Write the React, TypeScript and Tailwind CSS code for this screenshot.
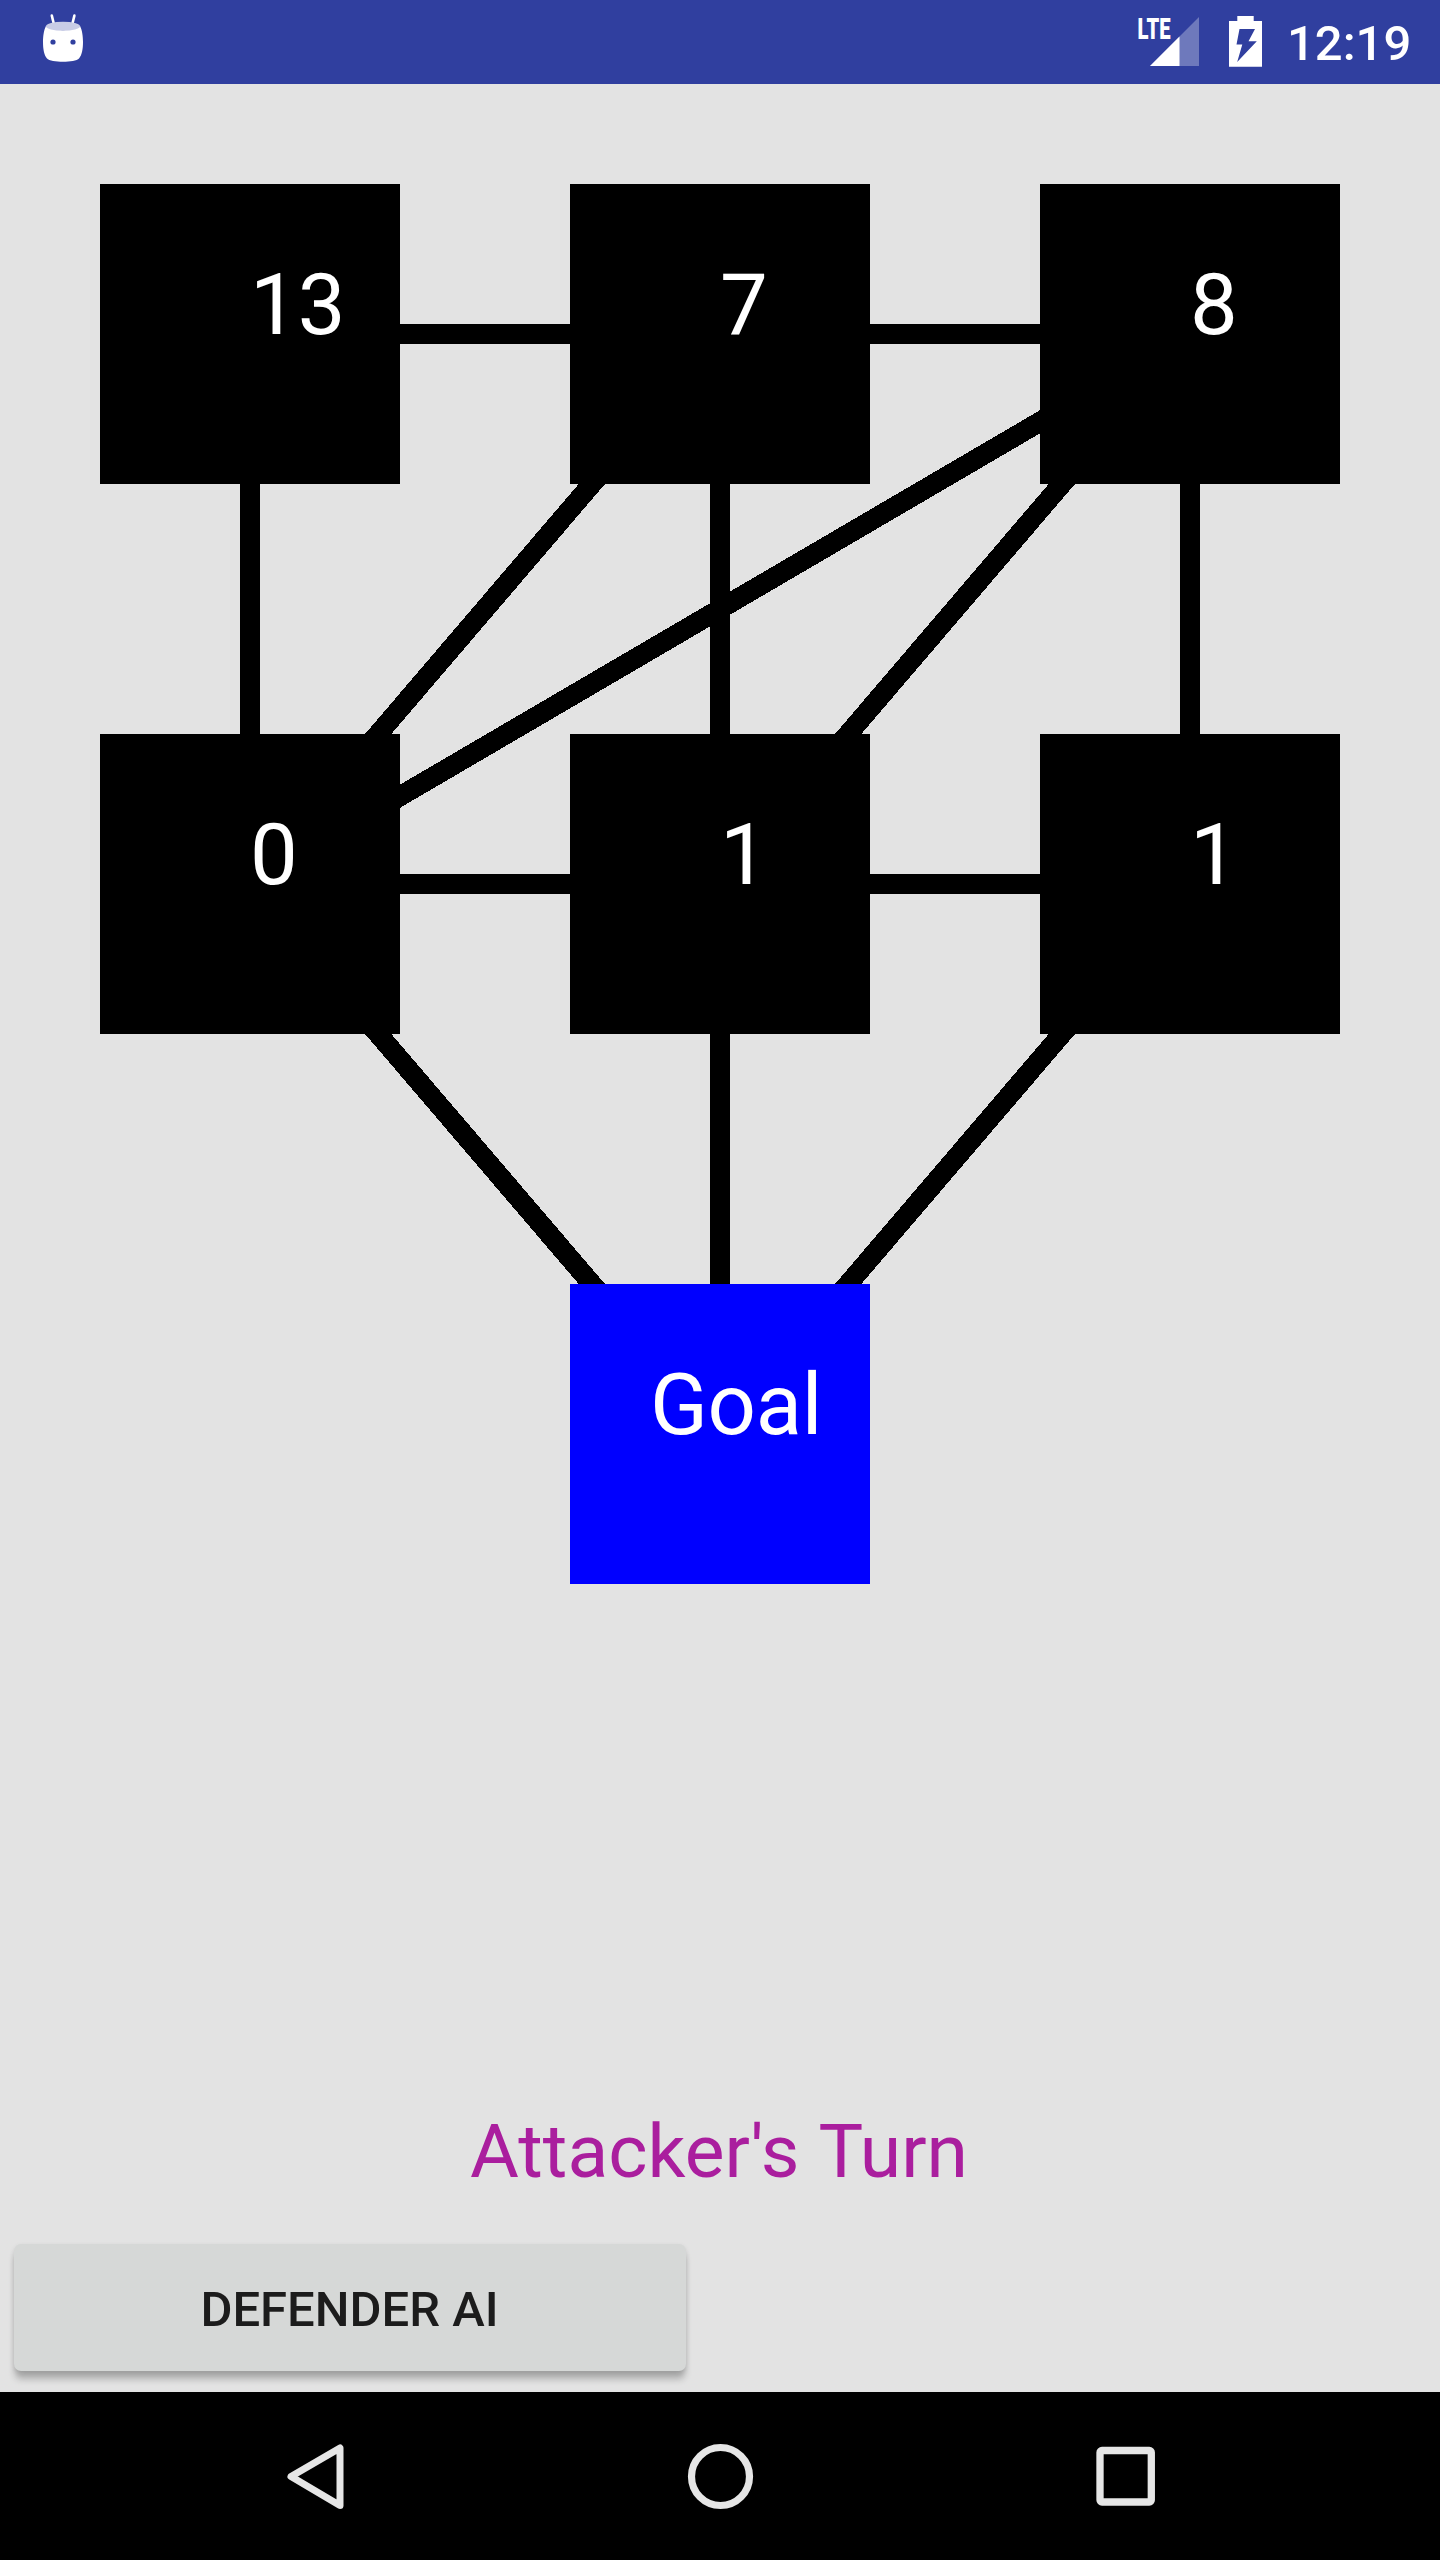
import React from "react";

type Edge = [number, number, number, number];

// Connections between node centres, in board coordinates.
const edges: Edge[] = [
  [250, 250, 720, 250],
  [720, 250, 1190, 250],
  [250, 800, 720, 800],
  [720, 800, 1190, 800],
  [250, 250, 250, 800],
  [720, 250, 720, 800],
  [1190, 250, 1190, 800],
  [720, 250, 250, 800],
  [1190, 250, 250, 800],
  [1190, 250, 720, 800],
  [250, 800, 720, 1350],
  [720, 800, 720, 1350],
  [1190, 800, 720, 1350],
];

const values = ["13", "7", "8", "0", "1", "1"];

function StatusBar() {
  return (
    <header className="flex h-[84px] shrink-0 items-start bg-[#303f9f] text-white">
      <svg className="ml-[42px] h-[84px] w-[42px]" viewBox="42 0 42 84">
        <path d="M51.8 15.6 L54 24.5 M74.4 15.6 L72.2 24.5" stroke="#fff" strokeWidth="2.6" strokeLinecap="round" />
        <path
          d="M46 26 C52 31.500 74 31.500 80 26 C82.300 30 83 37 83 42 C83 49 82 55 79 58.500 C75 62.800 51 62.800 47 58.500 C44 55 43 49 43 42 C43 37 43.700 30 46 26Z"
          fill="#fff"
        />
        <ellipse cx="63" cy="26.300" rx="17" ry="4.500" fill="#c8cce6" />
        <circle cx="53" cy="42" r="2.600" fill="#303f9f" />
        <circle cx="73" cy="42" r="2.600" fill="#303f9f" />
      </svg>
      <div className="ml-auto flex h-[84px]">
        <svg className="h-[84px] w-[66px]" viewBox="1136 0 66 84">
          <text x="1137.500" y="39.300" fontSize="29.500" fontWeight="900" textLength="33" lengthAdjust="spacingAndGlyphs" fill="#fff">
            LTE
          </text>
          <path d="M1199 17 V66 H1150Z" fill="#fff" fillOpacity="0.300" />
          <path d="M1179.500 36.500 V66 H1150Z" fill="#fff" />
        </svg>
        <svg className="ml-[24px] h-[84px] w-[40px]" viewBox="1226 0 40 84">
          <path
            fillRule="evenodd"
            fill="#fff"
            d="M1237.300 16 H1253.700 V21 H1262 V66.700 H1229 V21 H1237.300Z M1239.500 29 L1236.500 44.500 H1242.300 L1237.200 62 L1256.800 41.200 H1248.500 L1255 29Z"
          />
        </svg>
        <div className="ml-[21px] w-[153px] pt-[14px] text-[49px] font-medium leading-[60px] whitespace-nowrap">12:19</div>
      </div>
    </header>
  );
}

function Board() {
  return (
    <section className="relative h-[1500px] shrink-0 px-[100px] pt-[100px]">
      <svg className="absolute inset-0 h-[1500px] w-[1440px]" viewBox="0 0 1440 1500" shapeRendering="crispEdges">
        {edges.map(([x1, y1, x2, y2], i) => (
          <line key={i} x1={x1} y1={y1} x2={x2} y2={y2} stroke="#000" strokeWidth="20" />
        ))}
      </svg>
      <div className="relative grid grid-cols-[300px_300px_300px] gap-x-[170px] gap-y-[250px] text-[85px] leading-[100px] text-white">
        {values.map((value, i) => (
          <div key={i} className="h-[300px] bg-black pt-[71px] pl-[150px]">
            {value}
          </div>
        ))}
        <div className="col-start-2 h-[300px] bg-[#0000ff] pt-[71px] pl-[80px] tracking-[-0.3px]">Goal</div>
      </div>
    </section>
  );
}

function NavBar() {
  return (
    <nav className="flex h-[168px] shrink-0 items-center bg-black">
      <svg className="ml-[280px] h-[84px] w-[70px]" viewBox="280 2434 70 84" fill="none" stroke="#e6e6e6" strokeWidth="7" strokeLinejoin="round">
        <path d="M340 2448 V2505.500 L291 2476.500Z" />
      </svg>
      <svg className="ml-[330px] h-[84px] w-[80px]" viewBox="680 2434 80 84" fill="none" stroke="#e6e6e6" strokeWidth="7.200">
        <circle cx="720.500" cy="2476.500" r="29" />
      </svg>
      <svg className="ml-[330px] h-[84px] w-[70px]" viewBox="1090 2434 70 84" fill="none" stroke="#e6e6e6" strokeWidth="7.300">
        <rect x="1100" y="2450.500" width="51.300" height="51.500" rx="2" />
      </svg>
    </nav>
  );
}

export default function App() {
  return (
    <div className="flex h-[2560px] w-[1440px] flex-col overflow-hidden bg-[#e3e3e3] font-['Roboto',sans-serif]">
      <StatusBar />
      <Board />
      <main className="flex min-h-0 flex-1 flex-col">
        <p className="mt-[517px] pl-[470px] text-[75px] leading-[100px] [word-spacing:2px] whitespace-nowrap text-[#aa1e9e]">
          Attacker's Turn
        </p>
        <button className="mt-[43px] ml-[14px] flex h-[127px] w-[672px] items-center justify-center rounded-[7px] bg-[#d6d8d7] pt-[4px] pr-[1px] text-[49px] font-medium text-[#1c1c1c] shadow-[0_9px_7px_-1px_rgba(0,0,0,0.24),0_2px_5px_rgba(0,0,0,0.1)]">
          DEFENDER AI
        </button>
      </main>
      <NavBar />
    </div>
  );
}
